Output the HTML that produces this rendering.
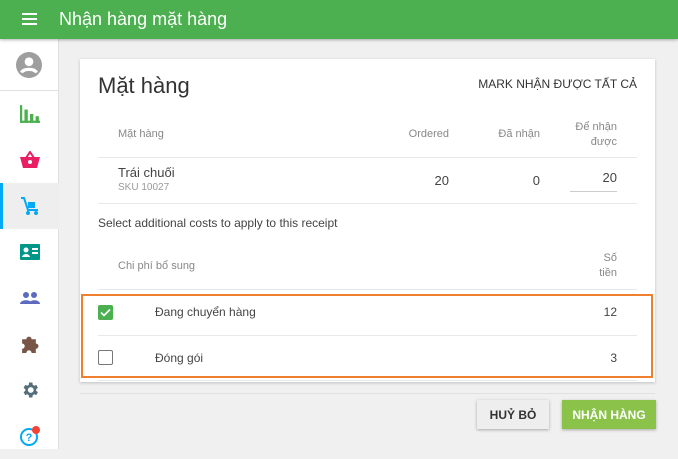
<!DOCTYPE html>
<html><head><meta charset="utf-8"><style>
*{margin:0;padding:0;box-sizing:border-box}
body{width:678px;height:449px;overflow:hidden;background:#f0f0f0;font-family:"Liberation Sans",Roboto,sans-serif;position:relative;color:#444}
.a{position:absolute}
.hdr{left:0;top:0;width:678px;height:39px;background:#4caf50;box-shadow:0 1px 3px rgba(0,0,0,.3);z-index:2}
.side{left:0;top:39px;width:59px;height:410px;background:#fff;border-right:1px solid #e0e0e0}
.ic{left:0;width:59px;height:46px;display:flex;align-items:center;justify-content:center}
.card{left:80px;top:59px;width:575px;height:323px;background:#fff;box-shadow:0 1px 3px rgba(0,0,0,.2)}
.lbl{font-size:11px;color:#888}
.hl{height:1px;background:#e8e8e8;left:98px;width:539px}
.r{text-align:right}
</style></head><body>
<div class="a hdr">
 <div class="a" style="left:22px;top:13px;width:15px;height:2px;background:#fff;box-shadow:0 5px 0 #fff,0 10px 0 #fff"></div>
 <div class="a" style="left:59px;top:9px;color:#fff;font-size:18px">Nhận hàng mặt hàng</div>
</div>
<div class="a side">
 <div class="a" style="left:0;top:0;width:58px;height:52px;border-bottom:1px solid #e0e0e0;display:flex;align-items:center;justify-content:center">
  <svg width="26" height="26" viewBox="0 0 24 24"><circle cx="12" cy="12" r="12" fill="#9e9e9e"/><circle cx="12" cy="9" r="4" fill="#fff"/><path d="M5 19c2-4 12-4 14 0" stroke="#fff" stroke-width="3" fill="none"/></svg></div>
 <div class="a ic" style="top:52px"><svg width="20" height="18" viewBox="0 0 18 16" fill="#4caf50"><rect x="0" y="0" width="2" height="16"/><rect x="0" y="14" width="18" height="2"/><rect x="4" y="4" width="3" height="12"/><rect x="9" y="8" width="3" height="8"/><rect x="14" y="10" width="3" height="6"/></svg></div>
 <div class="a ic" style="top:98px"><svg width="20" height="18" viewBox="0 0 20 18"><path d="M6 7L10 1L14 7" stroke="#e91e63" stroke-width="2" fill="none"/><path d="M0 6h20l-3 11H3z" fill="#e91e63"/><circle cx="10" cy="11" r="2" fill="#fff"/></svg></div>
 <div class="a ic" style="top:144px;background:#eee"><div class="a" style="left:0;top:0;width:3px;height:46px;background:#03a9f4"></div><svg width="20" height="20" viewBox="0 0 20 20"><path d="M1 2h3l4 12h10" stroke="#03a9f4" stroke-width="2" fill="none"/><rect x="8" y="6" width="7" height="6" fill="#03a9f4"/><circle cx="8" cy="17" r="2" fill="#03a9f4"/><circle cx="16" cy="17" r="2" fill="#03a9f4"/></svg></div>
 <div class="a ic" style="top:190px"><svg width="20" height="16" viewBox="0 0 20 16"><rect width="20" height="16" rx="1" fill="#009688"/><circle cx="6" cy="6" r="2.5" fill="#fff"/><path d="M2 13c1-4 7-4 8 0z" fill="#fff"/><rect x="12" y="4" width="6" height="2" fill="#fff"/><rect x="12" y="8" width="6" height="2" fill="#fff"/></svg></div>
 <div class="a ic" style="top:236px"><svg width="20" height="12" viewBox="0 0 20 12" fill="#5c6bc0"><circle cx="6" cy="3" r="3"/><circle cx="14" cy="3" r="3"/><path d="M0 12c0-5 12-5 12 0z"/><path d="M9 12c0-5 11-5 11 0z"/></svg></div>
 <div class="a ic" style="top:282px"><svg width="19" height="19" viewBox="0 0 18 18" fill="#795548"><path d="M2 4h4a2.5 2.5 0 015 0h4v4a2.5 2.5 0 010 5v4h-4a2.5 2.5 0 00-5 0H2v-4a2.5 2.5 0 000-5z"/></svg></div>
 <div class="a ic" style="top:328px"><svg width="20" height="20" viewBox="0 0 24 24"><path fill="#546e7a" d="M19.4 13a7.5 7.5 0 000-2l2.1-1.6-2-3.5-2.5 1a7 7 0 00-1.7-1L14.9 3h-4l-.4 2.9a7 7 0 00-1.7 1l-2.5-1-2 3.5L6.4 11a7.5 7.5 0 000 2l-2.1 1.6 2 3.5 2.5-1a7 7 0 001.7 1l.4 2.9h4l.4-2.9a7 7 0 001.7-1l2.5 1 2-3.5zM12.9 15.5a3.5 3.5 0 110-7 3.5 3.5 0 010 7z"/></svg></div>
 <div class="a ic" style="top:374px"><svg width="22" height="22" viewBox="0 0 22 22"><circle cx="10" cy="12" r="8" stroke="#03a9f4" stroke-width="2" fill="none"/><text x="10" y="16" font-size="11" font-weight="bold" fill="#03a9f4" text-anchor="middle" font-family="Liberation Sans">?</text><circle cx="17" cy="5" r="4" fill="#f44336"/></svg></div>
</div>
<div class="a card"></div>
<div class="a" style="left:98px;top:73px;font-size:22px;color:#333">Mặt hàng</div>
<div class="a r" style="left:437px;top:77px;width:200px;font-size:12px;color:#333">MARK NHẬN ĐƯỢC TẤT CẢ</div>
<div class="a lbl" style="left:118px;top:128px">Mặt hàng</div>
<div class="a lbl r" style="left:349px;top:128px;width:100px">Ordered</div>
<div class="a lbl r" style="left:440px;top:128px;width:100px">Đã nhận</div>
<div class="a lbl r" style="left:517px;top:120px;width:100px;line-height:15px">Để nhận<br>được</div>
<div class="a hl" style="top:157px"></div>
<div class="a" style="left:118px;top:165px;font-size:13px">Trái chuối</div>
<div class="a" style="left:118px;top:182px;font-size:10px;color:#999">SKU 10027</div>
<div class="a r" style="left:349px;top:173px;width:100px;font-size:13px">20</div>
<div class="a r" style="left:440px;top:173px;width:100px;font-size:13px">0</div>
<div class="a r" style="left:517px;top:170px;width:100px;font-size:13px">20</div>
<div class="a" style="left:570px;top:191px;width:47px;height:1px;background:#ccc"></div>
<div class="a hl" style="top:203px"></div>
<div class="a" style="left:98px;top:216px;font-size:12px;color:#444">Select additional costs to apply to this receipt</div>
<div class="a lbl" style="left:118px;top:260px">Chi phí bổ sung</div>
<div class="a lbl r" style="left:517px;top:251px;width:100px;line-height:15px">Số<br>tiền</div>
<div class="a hl" style="top:289px"></div>
<div class="a hl" style="top:335px"></div>
<div class="a hl" style="top:380px"></div>
<div class="a" style="left:98px;top:305px;width:15px;height:15px;background:#4caf50;border-radius:2px"><svg width="15" height="15" viewBox="0 0 15 15"><path d="M3 7.5l3 3 6-6" stroke="#fff" stroke-width="1.6" fill="none"/></svg></div>
<div class="a" style="left:155px;top:305px;font-size:12px">Đang chuyển hàng</div>
<div class="a r" style="left:517px;top:305px;width:100px;font-size:12px">12</div>
<div class="a" style="left:98px;top:350px;width:15px;height:15px;border:1.5px solid #777;border-radius:2px"></div>
<div class="a" style="left:155px;top:351px;font-size:12px">Đóng gói</div>
<div class="a r" style="left:517px;top:351px;width:100px;font-size:12px">3</div>
<div class="a" style="left:81px;top:294px;width:572px;height:84px;border:2.5px solid #f08030"></div>
<div class="a" style="left:80px;top:393px;width:575px;height:1px;background:#e0e0e0"></div>
<div class="a" style="left:477px;top:400px;width:72px;height:29px;background:#eee;box-shadow:0 1px 3px rgba(0,0,0,.3);font-size:12px;font-weight:bold;color:#333;display:flex;align-items:center;justify-content:center">HUỶ BỎ</div>
<div class="a" style="left:562px;top:400px;width:94px;height:29px;background:#8bc34a;box-shadow:0 1px 3px rgba(0,0,0,.3);font-size:12px;font-weight:bold;color:#fff;display:flex;align-items:center;justify-content:center">NHẬN HÀNG</div>
</body></html>
